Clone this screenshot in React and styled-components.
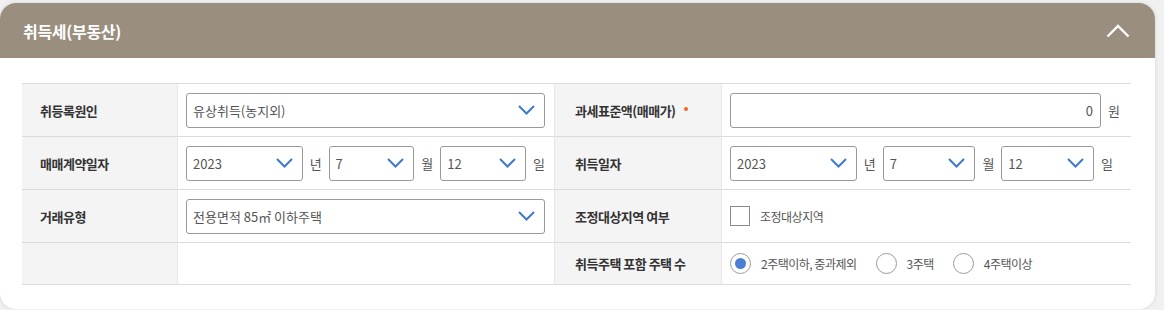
import React from "react";
import styled, { createGlobalStyle } from "styled-components";

const GlobalStyle = createGlobalStyle`
  body {
    margin: 0;
    background: #f1f1f1;
    font-family: "Noto Sans CJK KR", "Noto Sans", sans-serif;
  }
`;

const Page = styled.div`
  padding: 3px 9px 0 0;
`;

const Card = styled.section`
  background: #ffffff;
  border-radius: 16px;
  box-shadow: 0 0 4px rgba(0, 0, 0, 0.12);
  overflow: hidden;
`;

const Header = styled.header`
  height: 55px;
  background: #9a8f7e;
  display: flex;
  align-items: center;
  justify-content: space-between;
  padding: 0 25px 0 23px;
`;

const Title = styled.h2`
  margin: 0;
  color: #ffffff;
  font-size: 16px;
  font-weight: 700;
  letter-spacing: -0.3px;
`;

const Body = styled.div`
  padding: 25px 24px 24px 22px;
`;

const Grid = styled.div`
  display: grid;
  grid-template-columns: 155px 377px 167px 1fr;
  border-top: 1px solid #dcdcdc;
`;

const Label = styled.div`
  height: ${(p) => (p.$short ? 41 : 52)}px;
  display: flex;
  align-items: center;
  padding-left: ${(p) => (p.$right ? 20 : 18)}px;
  background: #f4f4f4;
  border-bottom: 1px solid #dcdcdc;
  border-left: ${(p) => (p.$right ? "1px solid #e6e6e6" : "none")};
  font-size: 13px;
  font-weight: 700;
  color: #333333;
  letter-spacing: -0.5px;
`;

const Required = styled.span`
  width: 4px;
  height: 4px;
  border-radius: 50%;
  background: #f26a21;
  margin-left: 8px;
  margin-bottom: 3px;
`;

const Value = styled.div`
  height: ${(p) => (p.$short ? 41 : 52)}px;
  display: flex;
  align-items: center;
  gap: 7px;
  padding: 0 ${(p) => p.$padRight || 9}px 0 8px;
  border-bottom: 1px solid #dcdcdc;
  border-left: 1px solid #e9e9e9;
  font-size: 13px;
  color: #555555;
`;

const SelectBox = styled.div`
  flex: ${(p) => p.$grow || 1};
  min-width: 0;
  height: 35px;
  box-sizing: border-box;
  border: 1px solid #999999;
  border-radius: 3px;
  display: flex;
  align-items: center;
  justify-content: space-between;
  padding: 0 9px 0 6px;
  font-size: 13px;
  color: #555555;
  background: #ffffff;
`;

const TextInput = styled.div`
  flex: 1;
  height: 35px;
  box-sizing: border-box;
  border: 1px solid #999999;
  border-radius: 3px;
  display: flex;
  align-items: center;
  justify-content: flex-end;
  padding-right: 7px;
  font-size: 13px;
  color: #555555;
`;

const Unit = styled.span`
  font-size: 13px;
  color: #555555;
  flex: none;
`;

const Check = styled.span`
  width: 20px;
  height: 20px;
  box-sizing: border-box;
  border: 1px solid #8a8a8a;
  background: #ffffff;
  flex: none;
`;

const SmallText = styled.span`
  font-size: 12px;
  color: #555555;
  letter-spacing: -0.5px;
  margin-left: 3px;
`;

const RadioGroup = styled.div`
  display: flex;
  align-items: center;
  gap: 19px;
`;

const RadioItem = styled.label`
  display: flex;
  align-items: center;
  gap: 7px;
`;

const Radio = styled.span`
  width: 21px;
  height: 21px;
  box-sizing: border-box;
  border-radius: 50%;
  border: 1px solid #9a9a9a;
  display: flex;
  align-items: center;
  justify-content: center;
  flex: none;

  &::after {
    content: "";
    width: 11px;
    height: 11px;
    border-radius: 50%;
    background: ${(p) => (p.$checked ? "#4a7fd5" : "transparent")};
  }
`;

const Chevron = () => (
  <svg width="17" height="10" viewBox="0 0 17 10" fill="none">
    <path d="M1 1 L8.5 8.5 L16 1" stroke="#3f78cf" strokeWidth="2" />
  </svg>
);

const UpArrow = () => (
  <svg width="24" height="14" viewBox="0 0 24 14" fill="none">
    <path d="M1.5 12.5 L12 2 L22.5 12.5" stroke="#ffffff" strokeWidth="2.4" />
  </svg>
);

function Select({ value, grow }) {
  return (
    <SelectBox $grow={grow}>
      <span>{value}</span>
      <Chevron />
    </SelectBox>
  );
}

function DateSelect({ year, month, day }) {
  return (
    <>
      <Select value={year} grow={1.45} />
      <Unit>년</Unit>
      <Select value={month} />
      <Unit>월</Unit>
      <Select value={day} />
      <Unit>일</Unit>
    </>
  );
}

const radios = [
  { text: "2주택이하, 중과제외", checked: true },
  { text: "3주택", checked: false },
  { text: "4주택이상", checked: false },
];

export default function App() {
  return (
    <Page>
      <GlobalStyle />
      <Card>
        <Header>
          <Title>취득세(부동산)</Title>
          <UpArrow />
        </Header>
        <Body>
          <Grid>
            <Label>취등록원인</Label>
            <Value>
              <Select value="유상취득(농지외)" />
            </Value>
            <Label $right>
              과세표준액(매매가)
              <Required />
            </Label>
            <Value $padRight={11}>
              <TextInput>0</TextInput>
              <Unit>원</Unit>
            </Value>

            <Label>매매계약일자</Label>
            <Value>
              <DateSelect year="2023" month="7" day="12" />
            </Value>
            <Label $right>취득일자</Label>
            <Value $padRight={18}>
              <DateSelect year="2023" month="7" day="12" />
            </Value>

            <Label>거래유형</Label>
            <Value>
              <Select value="전용면적 85㎡ 이하주택" />
            </Value>
            <Label $right>조정대상지역 여부</Label>
            <Value>
              <Check />
              <SmallText>조정대상지역</SmallText>
            </Value>

            <Label $short />
            <Value $short />
            <Label $right $short>
              취득주택 포함 주택 수
            </Label>
            <Value $short>
              <RadioGroup>
                {radios.map((r) => (
                  <RadioItem key={r.text}>
                    <Radio $checked={r.checked} />
                    <SmallText>{r.text}</SmallText>
                  </RadioItem>
                ))}
              </RadioGroup>
            </Value>
          </Grid>
        </Body>
      </Card>
    </Page>
  );
}
